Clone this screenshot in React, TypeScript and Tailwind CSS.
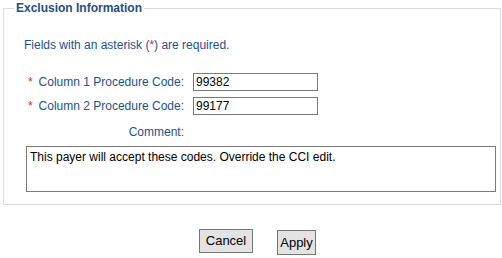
const labelCls = "w-[180px] text-right text-[12px] leading-[16px] text-[#1d5290]";
const inputCls =
  "h-[18px] w-[125px] border border-[#7a7a7a] bg-white px-[2px] text-[12px] leading-[16px] text-black outline-none";

const Field = ({ label, value }: { label: string; value: string }) => (
  <div className="flex items-center gap-[9px]">
    <div className={labelCls}>
      <span className="mr-[6px] text-[#d42a2a]">*</span>
      {label}
    </div>
    <input className={inputCls} defaultValue={value} readOnly />
  </div>
);

export default function App() {
  return (
    <div className="h-[258px] w-[502px] bg-white font-['Liberation_Sans',Arial,sans-serif]">
      <fieldset className="ml-[3px] h-[205px] w-[498px] border border-[#dcdcdc]">
        <legend className="ml-[10px] px-[2px] text-[12px] font-bold leading-[16px] text-[#1f4f85]">
          Exclusion Information
        </legend>
        <p className="ml-[20px] mt-[21px] text-[12px] leading-[16px] text-[#1d5290]">
          Fields with an asterisk (<span className="text-[#d42a2a]">*</span>) are required.
        </p>
        <div className="mt-[20px] flex flex-col gap-[6px]">
          <Field label="Column 1 Procedure Code:" value="99382" />
          <Field label="Column 2 Procedure Code:" value="99177" />
        </div>
        <div className={`${labelCls} mt-[9px]`}>Comment:</div>
        <textarea
          className="ml-[22px] mt-[6px] block h-[46px] w-[470px] resize-none border border-[#7a7a7a] px-[3px] py-[2px] text-[12px] leading-[16px] text-black outline-none"
          defaultValue="This payer will accept these codes. Override the CCI edit."
          readOnly
        />
      </fieldset>
      <div className="mt-[24px] flex items-start gap-[24px] pl-[199px]">
        <button className="h-[24px] w-[54px] border border-[#767676] bg-[#e3e3e3] text-[13px] leading-[16px] text-black">
          Cancel
        </button>
        <button className="mt-[1px] h-[25px] w-[39px] border border-[#767676] bg-[#e3e3e3] text-[13px] leading-[16px] text-black">
          Apply
        </button>
      </div>
    </div>
  );
}
